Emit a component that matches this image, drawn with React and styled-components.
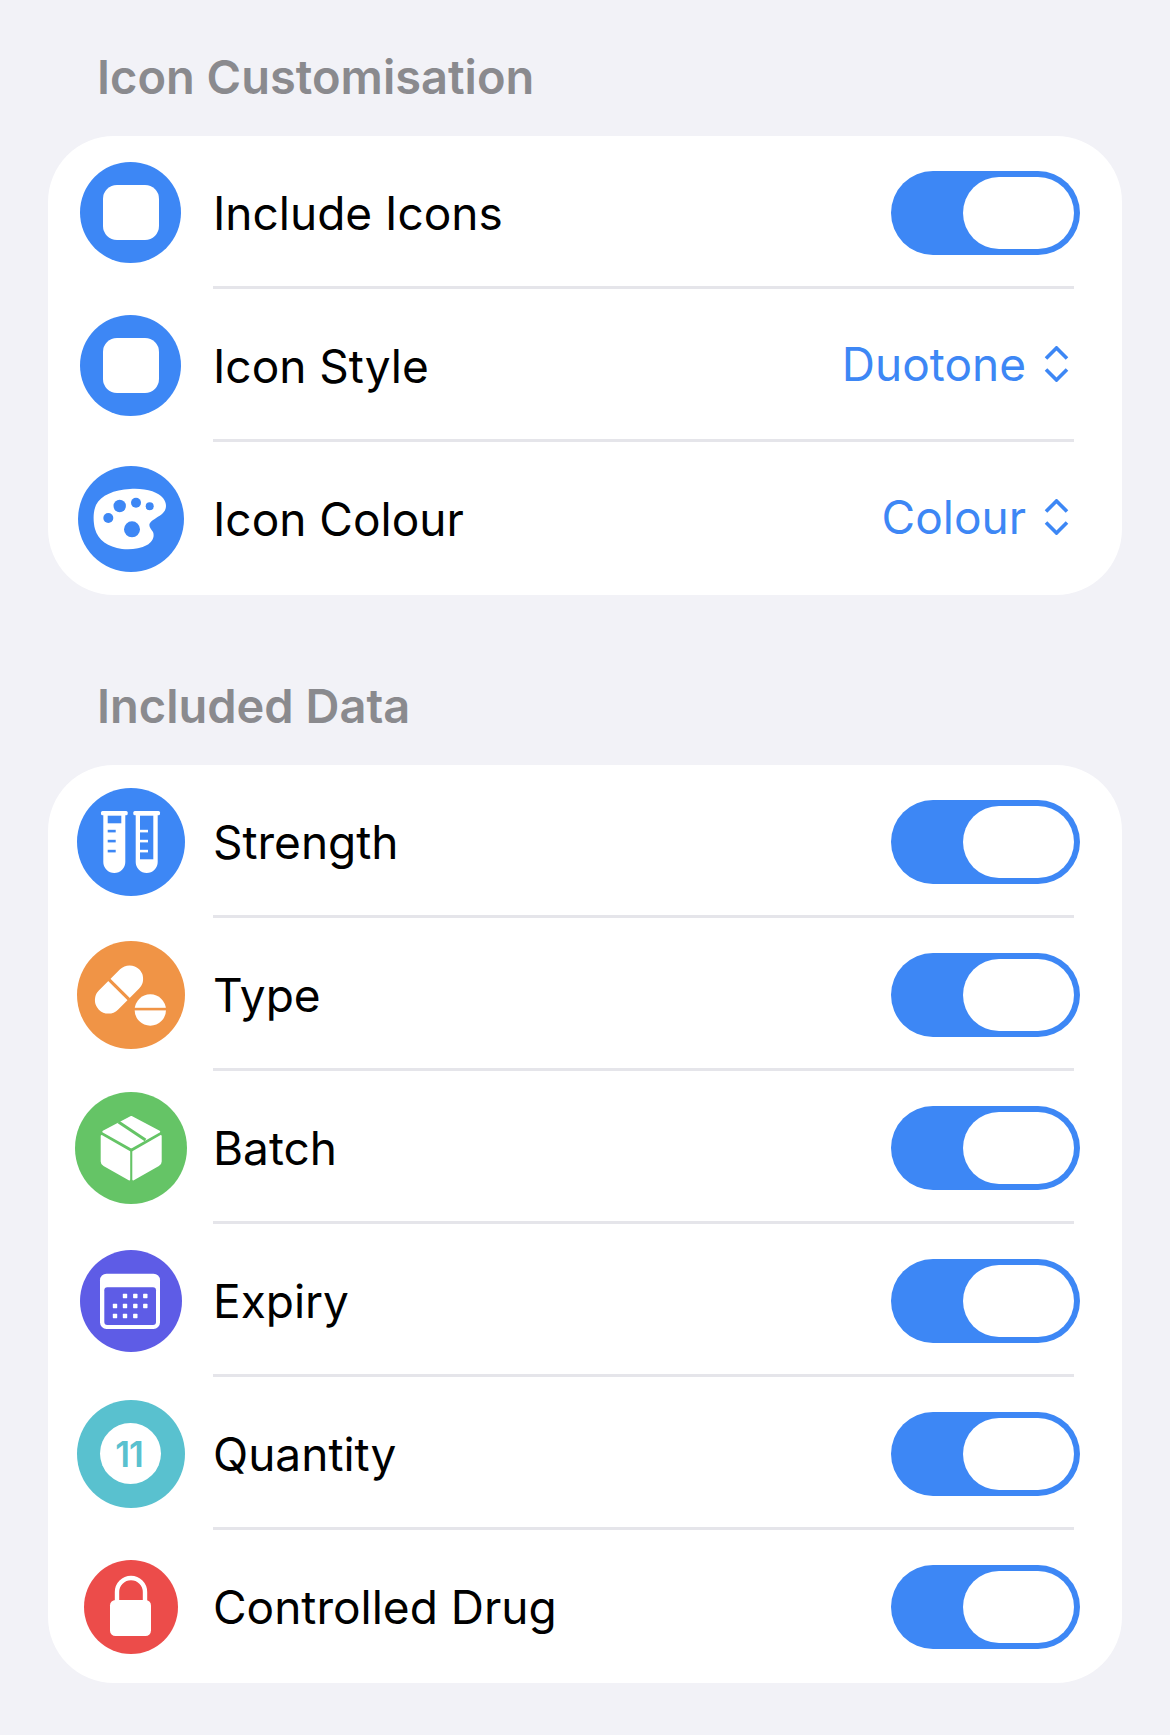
import React from "react";
import styled, { createGlobalStyle } from "styled-components";

const BLUE = "#3d87f5";

const GlobalStyle = createGlobalStyle`
  html, body {
    margin: 0;
    padding: 0;
    background: #f2f2f7;
  }
`;

function App() {
  return (
    <Page>
      <GlobalStyle />
      <SectionTitle>Icon Customisation</SectionTitle>
      <Card>
        <Row>
          <IconSlot><Circle $size={101} $color={BLUE}><Square /></Circle></IconSlot>
          <RowBody>
            <Label>Include Icons</Label>
            <Toggle />
          </RowBody>
        </Row>
        <Row>
          <IconSlot><Circle $size={101} $color={BLUE}><Square /></Circle></IconSlot>
          <RowBody>
            <Label>Icon Style</Label>
            <Picker value="Duotone" />
          </RowBody>
        </Row>
        <Row>
          <IconSlot><Circle $size={106} $color={BLUE}><PaletteIcon /></Circle></IconSlot>
          <RowBody>
            <Label>Icon Colour</Label>
            <Picker value="Colour" />
          </RowBody>
        </Row>
      </Card>

      <SectionTitle $next>Included Data</SectionTitle>
      <Card>
        <ToggleRow label="Strength" size={108} color={BLUE} icon={<TubesIcon />} />
        <ToggleRow label="Type" size={108} color="#f09446" icon={<PillsIcon />} />
        <ToggleRow label="Batch" size={112} color="#65c466" icon={<BoxIcon />} />
        <ToggleRow label="Expiry" size={102} color="#5e5ce6" icon={<CalendarIcon />} />
        <ToggleRow label="Quantity" size={108} color="#59c1cf" icon={<Dial>11</Dial>} />
        <ToggleRow label="Controlled Drug" size={94} color="#ec4c4a" icon={<LockIcon />} />
      </Card>
    </Page>
  );
}

function ToggleRow({ label, size, color, icon }) {
  return (
    <Row>
      <IconSlot>
        <Circle $size={size} $color={color}>{icon}</Circle>
      </IconSlot>
      <RowBody>
        <Label>{label}</Label>
        <Toggle />
      </RowBody>
    </Row>
  );
}

function Toggle() {
  return (
    <Track>
      <Thumb />
    </Track>
  );
}

function Picker({ value }) {
  return (
    <PickerWrap>
      <span>{value}</span>
      <Chevrons viewBox="0 0 25 36">
        <path d="M2 12.5 12.5 2 23 12.5M2 23.5 12.5 34 23 23.5" />
      </Chevrons>
    </PickerWrap>
  );
}

function PaletteIcon() {
  return (
    <svg width="106" height="106" viewBox="0 0 106 106">
      <path
        fill="#fff"
        d="M52 23C68 22 80 26 85 32C89 37 89 43 85 47C81 51 75 53 72 57C70 60 73 63 75 66C77 71 74 76 69 79C62 83 52 84 44 83C30 81 20 74 17 63C15 55 15 46 18 39C23 29 36 24 52 23Z"
      />
      <g fill={BLUE}>
        <circle cx="41.7" cy="40" r="6.2" />
        <circle cx="58" cy="36.7" r="5" />
        <circle cx="71.7" cy="40.3" r="4" />
        <circle cx="30.3" cy="52" r="5" />
        <circle cx="54" cy="63.3" r="8" />
      </g>
    </svg>
  );
}

function TubesIcon() {
  return (
    <svg width="108" height="108" viewBox="0 0 108 108">
      <g fill="#fff">
        <rect x="24" y="23" width="26.7" height="4.2" rx="1.5" />
        <path d="M26.3 25h22v49a11 11 0 0 1-22 0Z" />
        <rect x="56.3" y="23" width="26.7" height="4.2" rx="1.5" />
        <path d="M58.7 25h22v49a11 11 0 0 1-22 0Z" />
      </g>
      <g fill={BLUE}>
        <rect x="30.7" y="27.7" width="13.6" height="7.6" />
        <rect x="30.7" y="41.8" width="8" height="2.6" />
        <rect x="30.7" y="51.8" width="8" height="2.6" />
        <rect x="30.7" y="61.8" width="8" height="2.6" />
        <rect x="63" y="27.7" width="13.3" height="43.6" />
      </g>
      <g fill="#fff">
        <rect x="63" y="41.8" width="8" height="2.6" />
        <rect x="63" y="51.8" width="8" height="2.6" />
        <rect x="63" y="61.8" width="8" height="2.6" />
      </g>
    </svg>
  );
}

function PillsIcon() {
  return (
    <svg width="108" height="108" viewBox="0 0 108 108">
      <g transform="rotate(-45 42 48.5)">
        <rect x="13.5" y="35" width="57" height="27" rx="13.5" fill="#fff" />
        <rect x="40.4" y="33" width="3.2" height="31" fill="#f09446" />
      </g>
      <circle cx="73.3" cy="69" r="15.7" fill="#fff" />
      <rect x="56" y="66.8" width="36" height="2.6" fill="#f09446" />
    </svg>
  );
}

function BoxIcon() {
  return (
    <svg width="112" height="112" viewBox="0 0 112 112">
      <g fill="#fff" stroke="#fff" strokeWidth="2" strokeLinejoin="round">
        <path d="M26.7 44 54.2 59.9V87.5L29 73.2Q26.7 72 26.7 69.5Z" />
        <path d="M85.7 44 58.3 59.9V87.5L83.4 73.2Q85.7 72 85.7 69.5Z" />
        <path d="M28.3 39.7 56.3 25 84.2 39.7 56.3 55.3Z" />
      </g>
      <path d="M43.5 30 70.5 48" stroke="#65c466" strokeWidth="3" fill="none" />
    </svg>
  );
}

function CalendarIcon() {
  const rows = [
    [45, 55.3, 65.3],
    [35, 45, 55.3, 65.3],
    [35, 45, 55.3],
  ];
  return (
    <svg width="102" height="102" viewBox="0 0 102 102">
      <rect x="20" y="23.7" width="60" height="55.3" rx="6.5" fill="#fff" />
      <rect x="24.3" y="37.3" width="51.7" height="37.7" rx="3" fill="#5e5ce6" />
      {rows.map((cols, r) =>
        cols.map((x) => (
          <rect key={`${r}-${x}`} x={x - 2.2} y={46 + r * 10 - 2.2} width="4.4" height="4.4" rx="0.6" fill="#fff" />
        ))
      )}
    </svg>
  );
}

function LockIcon() {
  return (
    <svg width="94" height="94" viewBox="0 0 94 94">
      <path d="M33 42V32a14 14 0 0 1 28 0V42" fill="none" stroke="#fff" strokeWidth="4.4" />
      <rect x="26" y="40" width="41" height="36" rx="5.5" fill="#fff" />
    </svg>
  );
}

const Page = styled.div`
  box-sizing: border-box;
  width: 1170px;
  min-height: 1735px;
  padding: 50px 48px 0;
  background: #f2f2f7;
  font-family: Inter, "Noto Sans", sans-serif;
`;

const SectionTitle = styled.h2`
  margin: ${(p) => (p.$next ? "84px" : "0")} 0 32px 49px;
  font-size: 47px;
  line-height: 54px;
  font-weight: 600;
  color: #8a8a8e;
`;

const Card = styled.div`
  background: #fff;
  border-radius: 66px;
  overflow: hidden;
`;

const Row = styled.div`
  display: flex;
  height: 153px;
`;

const IconSlot = styled.div`
  flex: 0 0 165px;
  display: flex;
  align-items: center;
  justify-content: center;
`;

const Circle = styled.div`
  width: ${(p) => p.$size}px;
  height: ${(p) => p.$size}px;
  border-radius: 50%;
  background: ${(p) => p.$color};
  display: flex;
  align-items: center;
  justify-content: center;
  svg {
    display: block;
  }
`;

const Square = styled.div`
  width: 56px;
  height: 55px;
  border-radius: 14px;
  background: #fff;
`;

const Dial = styled.div`
  box-sizing: border-box;
  width: 61px;
  height: 61px;
  padding-right: 3px;
  border-radius: 50%;
  background: #fff;
  color: #59c1cf;
  font-size: 35px;
  font-weight: 600;
  letter-spacing: -1px;
  display: flex;
  align-items: center;
  justify-content: center;
`;

const RowBody = styled.div`
  flex: 1;
  margin-right: 48px;
  padding-top: 3px;
  display: flex;
  align-items: center;
  justify-content: space-between;
  border-bottom: 3px solid #e5e5ea;
  ${Row}:last-child & {
    border-bottom-color: transparent;
  }
`;

const Label = styled.span`
  font-size: 46px;
  line-height: 56px;
  color: #000;
`;

const Track = styled.div`
  box-sizing: border-box;
  width: 189px;
  height: 84px;
  margin-right: -6px;
  padding: 6px;
  border-radius: 42px;
  background: ${BLUE};
  display: flex;
  justify-content: flex-end;
`;

const Thumb = styled.div`
  width: 111px;
  height: 72px;
  border-radius: 36px;
  background: #fff;
`;

const PickerWrap = styled.div`
  display: flex;
  align-items: center;
  gap: 18px;
  margin: 0 5px 3px 0;
  font-size: 46px;
  line-height: 56px;
  color: ${BLUE};
`;

const Chevrons = styled.svg`
  width: 25px;
  height: 36px;
  fill: none;
  stroke: ${BLUE};
  stroke-width: 3.6;
`;

export default App;
